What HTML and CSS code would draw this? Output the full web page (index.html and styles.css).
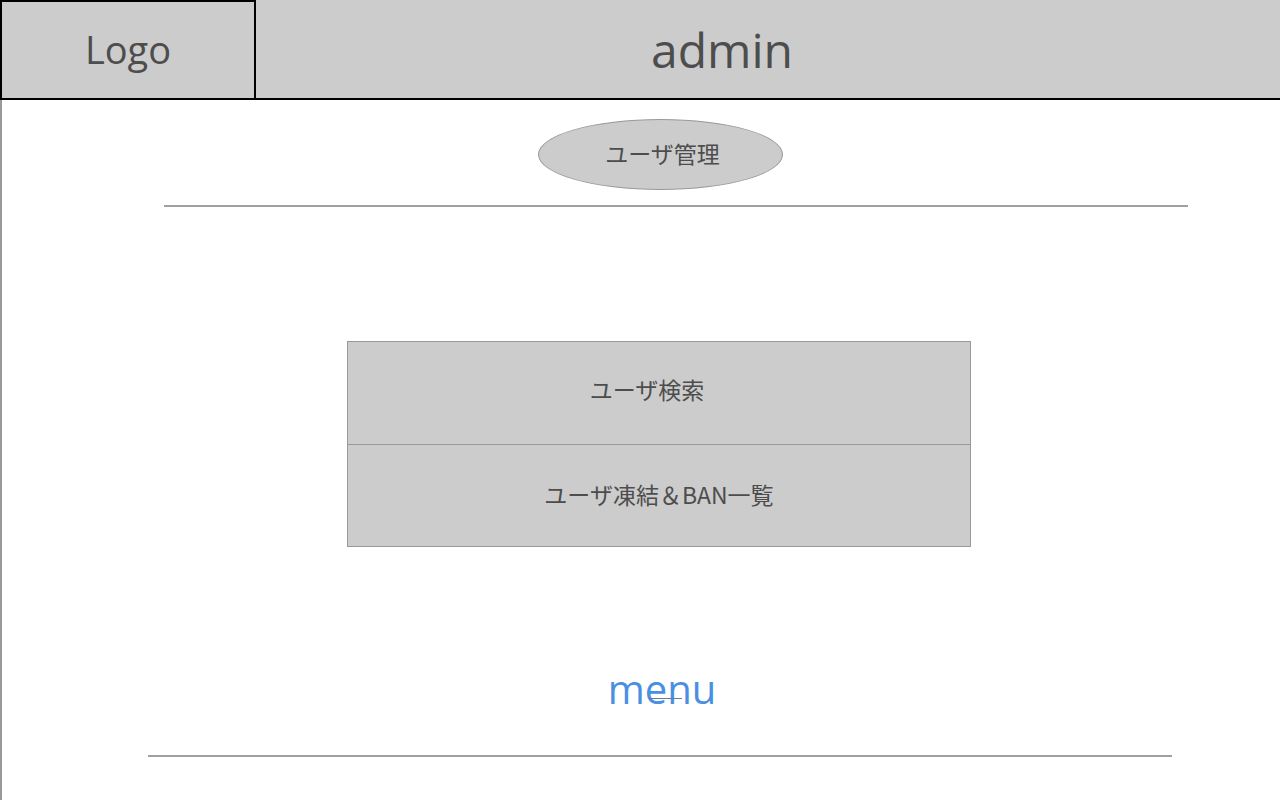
FILE: index.html
```html
<!DOCTYPE html>
<html lang="ja">
<head>
<meta charset="utf-8">
<title>admin</title>
<link rel="stylesheet" href="styles.css">
</head>
<body>
<header class="header">
  <div class="logo">Logo</div>
  <div class="title">admin</div>
</header>
<main class="main">
  <div class="pill">ユーザ管理</div>
  <div class="rule rule-top"></div>
  <div class="menu-box">
    <div class="menu-item menu-item-first">ユーザ検索</div>
    <div class="menu-item">ユーザ凍結＆BAN一覧</div>
  </div>
  <div class="menu-link"><span class="menu-text">menu</span></div>
  <div class="rule rule-bottom"></div>
</main>
</body>
</html>
```

FILE: styles.css
```css
* { box-sizing: border-box; }
html, body { margin: 0; padding: 0; }
body {
  width: 1280px;
  height: 800px;
  overflow: hidden;
  background: #ffffff;
  font-family: "Open Sans", "Noto Sans CJK JP", sans-serif;
  color: #4d4d4d;
}
.header {
  display: flex;
  height: 100px;
  background: #cccccc;
  border-bottom: 2px solid #000000;
}
.logo {
  width: 256px;
  height: 98px;
  border: 2px solid #000000;
  border-bottom: none;
  display: flex;
  align-items: center;
  justify-content: center;
  font-size: 38px;
  padding-bottom: 3px;
  color: #4d4d4d;
}
.title {
  flex: 1;
  display: flex;
  align-items: center;
  justify-content: center;
  padding-right: 92px;
  font-size: 48px;
  color: #4d4d4d;
}
.main {
  height: 700px;
  border-left: 2px solid #999999;
  display: flex;
  flex-direction: column;
  align-items: flex-start;
}
.pill {
  margin: 19px 0 0 536px;
  width: 245px;
  height: 71px;
  border: 1px solid #999999;
  border-radius: 50%;
  background: #cccccc;
  display: flex;
  align-items: center;
  justify-content: center;
  font-family: "Noto Sans CJK JP", sans-serif;
  font-size: 23px;
  color: #4d4d4d;
  padding-bottom: 4px;
  padding-left: 4px;
}
.rule {
  width: 1024px;
  height: 2px;
  background: #a0a0a0;
}
.rule-top { margin: 15px 0 0 162px; }
.rule-bottom { margin: 42px 0 0 146px; }
.menu-box {
  margin: 134px 0 0 345px;
  width: 624px;
  height: 206px;
  border: 1px solid #999999;
  background: #cccccc;
  display: grid;
  grid-template-rows: 102px 102px;
}
.menu-item {
  display: flex;
  align-items: center;
  justify-content: center;
  font-family: "Noto Sans CJK JP", sans-serif;
  font-size: 23px;
  color: #4d4d4d;
  padding-bottom: 4px;
}
.menu-item-first {
  padding-right: 24px;
  padding-bottom: 8px;
}
.menu-item + .menu-item {
  border-top: 1px solid #999999;
}
.menu-link {
  margin: 118px 0 0 0;
  width: 100%;
  height: 48px;
  display: flex;
  justify-content: center;
  padding-left: 42px;
}
.menu-text {
  position: relative;
  font-family: "Open Sans", sans-serif;
  font-size: 40px;
  line-height: 48px;
  color: #4a90e2;
}
.menu-text::after {
  content: "";
  position: absolute;
  left: 41px;
  top: 33px;
  width: 33px;
  height: 1px;
  background: #5a7fa8;
}
```
